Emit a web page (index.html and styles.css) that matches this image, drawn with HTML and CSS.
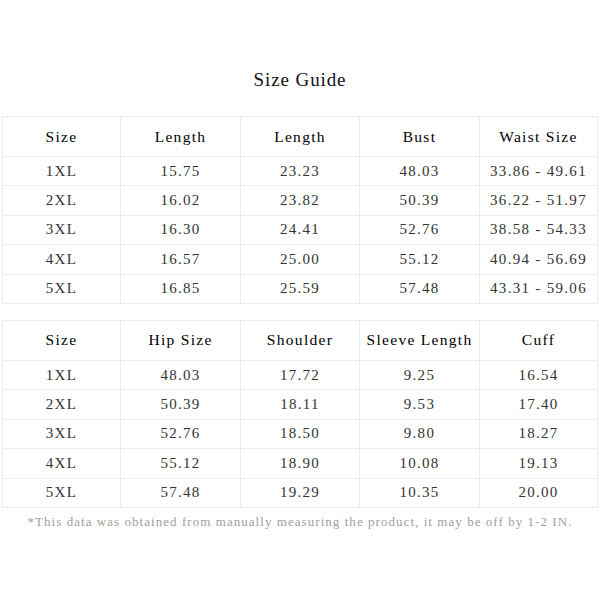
FILE: index.html
```html
<!DOCTYPE html>
<html>
<head>
<meta charset="utf-8">
<link rel="stylesheet" href="styles.css">
</head>
<body>
<div class="page">
  <h1 class="title">Size Guide</h1>
  <div class="table first">
    <div class="row head"><div>Size</div><div>Length</div><div>Length</div><div>Bust</div><div>Waist Size</div></div>
    <div class="row"><div>1XL</div><div>15.75</div><div>23.23</div><div>48.03</div><div>33.86 - 49.61</div></div>
    <div class="row"><div>2XL</div><div>16.02</div><div>23.82</div><div>50.39</div><div>36.22 - 51.97</div></div>
    <div class="row"><div>3XL</div><div>16.30</div><div>24.41</div><div>52.76</div><div>38.58 - 54.33</div></div>
    <div class="row"><div>4XL</div><div>16.57</div><div>25.00</div><div>55.12</div><div>40.94 - 56.69</div></div>
    <div class="row"><div>5XL</div><div>16.85</div><div>25.59</div><div>57.48</div><div>43.31 - 59.06</div></div>
  </div>
  <div class="table second">
    <div class="row head"><div>Size</div><div>Hip Size</div><div>Shoulder</div><div>Sleeve Length</div><div>Cuff</div></div>
    <div class="row"><div>1XL</div><div>48.03</div><div>17.72</div><div>9.25</div><div>16.54</div></div>
    <div class="row"><div>2XL</div><div>50.39</div><div>18.11</div><div>9.53</div><div>17.40</div></div>
    <div class="row"><div>3XL</div><div>52.76</div><div>18.50</div><div>9.80</div><div>18.27</div></div>
    <div class="row"><div>4XL</div><div>55.12</div><div>18.90</div><div>10.08</div><div>19.13</div></div>
    <div class="row"><div>5XL</div><div>57.48</div><div>19.29</div><div>10.35</div><div>20.00</div></div>
  </div>
  <p class="note">*This data was obtained from manually measuring the product, it may be off by 1-2 IN.</p>
</div>
</body>
</html>
```

FILE: styles.css
```css
html, body {
  margin: 0;
  padding: 0;
  background: #fff;
}
.page {
  width: 600px;
  height: 600px;
  padding: 0 2px;
  box-sizing: border-box;
  font-family: "Liberation Serif", serif;
  color: #333;
}
.title {
  margin: 0;
  height: 116px;
  padding-top: 68px;
  box-sizing: border-box;
  text-align: center;
  font-weight: normal;
  font-size: 19px;
  line-height: 24px;
  letter-spacing: 0.9px;
  color: #111;
}
.table {
  border-top: 1px solid #ececec;
  border-left: 1px solid #ececec;
  width: 596px;
  box-sizing: border-box;
}
.second {
  margin-top: 16px;
}
.row {
  display: grid;
  grid-template-columns: 118px 120px 119px 120px 118px;
  height: 29.4px;
}
.row.head {
  height: 40px;
}
.row > div {
  border-right: 1px solid #ececec;
  border-bottom: 1px solid #ececec;
  display: flex;
  align-items: center;
  justify-content: center;
  font-size: 15px;
  letter-spacing: 1.3px;
}
.row.head > div {
  font-size: 15.5px;
  letter-spacing: 1.3px;
  color: #000;
}
.note {
  margin: 6px 0 0;
  text-align: center;
  font-size: 13px;
  line-height: 16px;
  color: #a0a0a0;
  letter-spacing: 1.05px;
  white-space: nowrap;
}
```
